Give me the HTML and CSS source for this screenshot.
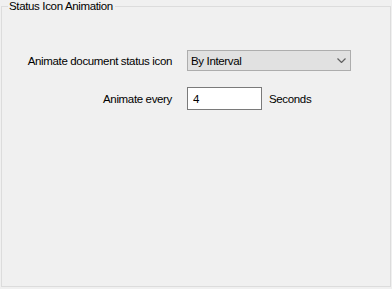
FILE: index.html
```html
<!DOCTYPE html>
<html lang="en">
<head>
  <meta charset="UTF-8">
  <title>Status Icon Animation</title>
  <link rel="stylesheet" href="styles.css">
</head>
<body>

  <fieldset class="group">
    <legend>Status Icon Animation</legend>

    <div class="row first">
      <label class="caption">Animate document status icon</label>
      <div class="combo">
        <span>By Interval</span>
        <svg class="chevron" width="9" height="5" viewBox="0 0 9 5">
          <path d="M0.5 0.5 L4.5 4.5 L8.5 0.5" fill="none" stroke="#606060" stroke-width="1.2"/>
        </svg>
      </div>
    </div>

    <div class="row">
      <label class="caption">Animate every</label>
      <input type="text" class="field" value="4">
      <span class="unit">Seconds</span>
    </div>
  </fieldset>

</body>
</html>
```

FILE: styles.css
```css
html, body {
  margin: 0;
  padding: 0;
  background-color: #f0f0f0;
}

body {
  font-family: 'Liberation Sans', Arial, sans-serif;
  font-size: 11.5px;
  letter-spacing: -0.35px;
  color: #000;
  padding: 0 1px;
  height: 289px;
  box-sizing: border-box;
}

.group {
  margin: 0;
  padding: 0;
  border: 1px solid #dcdcdc;
  height: 287px;
  box-sizing: border-box;
  min-width: 0;
}

.group legend {
  margin-left: 6px;
  padding: 0 2px 0 1px;
  line-height: 12px;
}

.row {
  display: flex;
  align-items: center;
}

.row.first {
  margin-top: 38px;
  height: 21px;
}

.row + .row {
  margin-top: 16px;
}

.caption {
  width: 170px;
  text-align: right;
  margin-right: 15px;
}

.combo {
  width: 164px;
  height: 21px;
  box-sizing: border-box;
  background-color: #e1e1e1;
  border: 1px solid #adadad;
  display: flex;
  align-items: center;
  justify-content: space-between;
  padding: 0 4px 0 3px;
}

.field {
  width: 75px;
  height: 23px;
  box-sizing: border-box;
  border: 1px solid #7a7a7a;
  background-color: #fff;
  font-family: inherit;
  font-size: inherit;
  letter-spacing: inherit;
  padding: 0 5px;
  margin: 0;
  outline: none;
}

.unit {
  margin-left: 7px;
}
```
